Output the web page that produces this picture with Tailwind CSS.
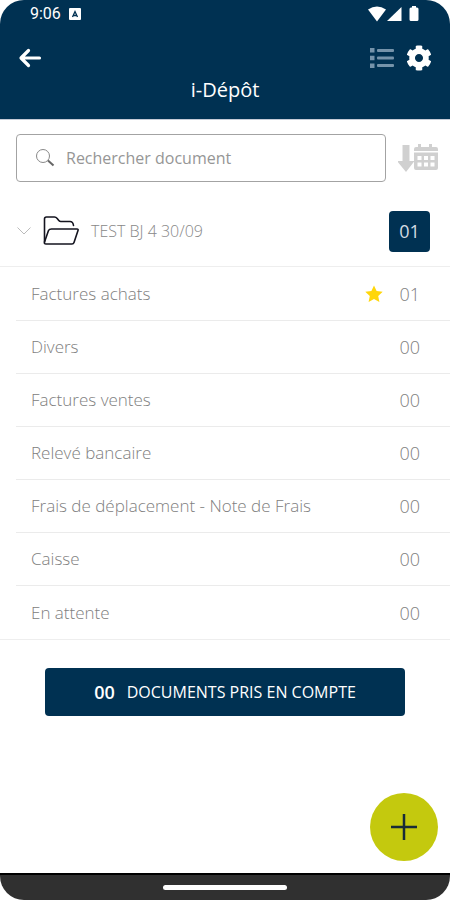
<!DOCTYPE html>
<html lang="fr">
<head>
    <meta charset="UTF-8">
    <meta name="viewport" content="width=device-width, initial-scale=1.0">
    <title>i-Dépôt</title>
    <script src="https://cdn.jsdelivr.net/npm/@tailwindcss/browser@4"></script>
</head>
<body class="bg-white font-['Open_Sans',sans-serif]">
    <div class="min-h-screen flex flex-col rounded-3xl overflow-hidden bg-white">
        <header class="bg-[#003152] text-white border-b border-[#c5cad6] pb-3">
            <!-- Status bar -->
            <div class="flex items-center justify-between h-7 px-[30px]">
                <div class="flex items-center gap-2">
                    <span class="font-[Roboto,sans-serif] text-base">9:06</span>
                    <svg class="w-3 h-3" viewBox="0 0 12 12" fill="none">
                        <rect width="12" height="12" rx="1" fill="#fff"/>
                        <path d="M3.500 9 6 3.500 8.500 9M4.500 7.500h3" stroke="#003152" stroke-width="1.300"/>
                    </svg>
                </div>
                <svg class="w-[52px] h-4" viewBox="0 0 52 16" fill="#fff">
                    <path d="M0 3.500Q9 -2.500 18 3.500L9 15.500z"/>
                    <path d="M33.500 1v14H19z"/>
                    <path d="M44 0h4v1.500h1q1.500 0 1.500 1.500v10.500q0 1.500-1.500 1.500h-6q-1.500 0-1.500-1.500V3q0-1.500 1.500-1.500h1z"/>
                </svg>
            </div>
            <div class="flex items-center justify-between h-7 mt-4 px-[18px]">
                <button type="button" aria-label="Retour">
                    <svg class="w-6 h-6" viewBox="0 0 24 24" fill="none" stroke="#fff" stroke-width="3.200" stroke-linecap="round" stroke-linejoin="round">
                        <path d="M10.500 4.500 3 12l7.500 7.500M3.500 12h18"/>
                    </svg>
                </button>
                <div class="flex items-center gap-3">
                    <button type="button" aria-label="Liste">
                        <svg class="w-6 h-6" viewBox="0 0 24 24" fill="#7593aa">
                            <path d="M0 2h4.500v4.500H0zM0 9.700h4.500v4.500H0zM0 17.400h4.500v4.500H0z"/>
                            <rect x="7" y="3" width="17" height="3" rx="1"/>
                            <rect x="7" y="10.500" width="17" height="3" rx="1"/>
                            <rect x="7" y="18" width="17" height="3" rx="1"/>
                        </svg>
                    </button>
                    <button type="button" aria-label="Paramètres">
                        <svg class="w-[26px] h-[26px]" viewBox="0 0 512 512" fill="#fff">
                            <path d="M487.400 315.700l-42.600-24.600c4.300-23.200 4.300-47 0-70.200l42.600-24.600c4.900-2.800 7.100-8.600 5.500-14-11.100-35.600-30-67.800-54.700-94.600-3.800-4.100-10-5.100-14.800-2.300L380.800 110c-17.900-15.400-38.500-27.300-60.800-35.100V25.800c0-5.600-3.900-10.500-9.400-11.700-36.700-8.200-74.300-7.800-109.200 0-5.500 1.200-9.400 6.100-9.400 11.700V75c-22.200 7.900-42.800 19.800-60.800 35.100L88.700 85.500c-4.900-2.800-11-1.900-14.800 2.300-24.700 26.700-43.600 58.900-54.700 94.600-1.700 5.400.6 11.200 5.500 14L67.300 221c-4.300 23.200-4.300 47 0 70.200l-42.600 24.600c-4.900 2.800-7.100 8.600-5.500 14 11.100 35.600 30 67.800 54.700 94.600 3.800 4.100 10 5.100 14.800 2.300l42.600-24.600c17.900 15.400 38.500 27.300 60.800 35.100v49.200c0 5.600 3.900 10.500 9.400 11.700 36.700 8.200 74.300 7.800 109.200 0 5.500-1.200 9.400-6.100 9.400-11.700v-49.200c22.200-7.900 42.800-19.800 60.800-35.100l42.600 24.600c4.900 2.800 11 1.900 14.800-2.300 24.700-26.700 43.600-58.900 54.700-94.600 1.500-5.500-.7-11.300-5.600-14.100zM256 336c-44.100 0-80-35.900-80-80s35.900-80 80-80 80 35.900 80 80-35.900 80-80 80z"/>
                        </svg>
                    </button>
                </div>
            </div>
            <h1 class="text-center text-xl leading-[35px]">i-Dépôt</h1>
        </header>

        <main class="relative flex-1">
            <div class="flex items-center gap-3 pt-[14px] pl-4 pr-3">
                <div class="flex-1 flex items-center gap-[11px] h-12 pl-[18px] border border-[#a3a3a3] rounded">
                    <svg class="w-5 h-5 shrink-0" viewBox="0 0 20 20" fill="none" stroke="#888">
                        <circle cx="8" cy="8" r="6.500"/>
                        <path d="M13 12.500l5.500 5" stroke-width="2" stroke="#666"/>
                    </svg>
                    <input type="text" aria-label="Rechercher document" placeholder="Rechercher document" class="w-full min-w-0 text-base text-[#666] placeholder:text-[#969696] outline-none">
                </div>
                <button type="button" aria-label="Trier par date">
                    <svg class="w-10 h-7" viewBox="0 0 40 28" fill="#d0d0d0">
                        <path d="M4.500 1h7v16h5L8 28-1 17h5.500z"/>
                        <path fill-rule="evenodd" d="M20 0h3v3h8V0h3v3h4q2 0 2 2v2H16V5q0-2 2-2h2zM16 8.500h24V24q0 2-2 2H18q-2 0-2-2zM19.500 12v4h4v-4zM26 12v4h4v-4zM32.500 12v4h4v-4zM19.500 18.500v4h4v-4zM26 18.500v4h4v-4zM32.500 18.500v4h4v-4z"/>
                    </svg>
                </button>
            </div>

            <!-- Folder -->
            <div class="flex items-center h-[70px] mt-[14px] pl-[17px] pr-5">
                <button type="button" aria-expanded="true" class="flex flex-1 items-center text-base font-light text-[#888]">
                    <svg class="w-[14px] h-2 mr-3" viewBox="0 0 14 8" fill="none" stroke="#bbb">
                        <path d="M.5.5 7 7 13.500.5"/>
                    </svg>
                    <svg class="w-9 h-[30px] mr-3" viewBox="0 0 36 30" fill="none" stroke="#14141f" stroke-width="1.600" stroke-linejoin="round" stroke-linecap="round">
                        <path d="M1.500 26V3q0-2 2-2h8q1.500 0 2.500 1.300l1.800 2.200q.8 1 2 1H27q3 0 3.500 4"/>
                        <path d="M8.500 13H34q1.500 0 1 1.500l-4 12q-.5 1.500-2 1.500H3q-2 0-1.500-2l4-11.500Q6.200 13 8.500 13z"/>
                    </svg>
                    TEST BJ 4 30/09
                </button>
                <span class="flex items-center justify-center w-[41px] h-[41px] rounded bg-[#003152] text-lg text-[#d5dce3]">01</span>
            </div>

            <!-- Categories -->
            <ul class="border-y border-[#eee] text-[17px] font-light text-[#808080]">
                <li class="flex items-center h-[54px] ml-4 pl-[15px] pr-[30px] border-b border-[#ebebeb]">
                    <a href="#" class="flex-1">Factures achats</a>
                    <svg class="w-[18px] h-[18px] mr-4" viewBox="0 0 18 18" fill="#ffd60a">
                        <path d="M9 .5l2.600 5.600 6.100.7-4.500 4.200 1.200 6.100L9 14.100l-5.400 3 1.200-6.100L.3 6.800l6.100-.7z"/>
                    </svg>
                    <span class="text-lg">01</span>
                </li>
                <li class="flex items-center h-[53px] ml-4 pl-[15px] pr-[30px] border-b border-[#ebebeb]">
                    <a href="#" class="flex-1">Divers</a>
                    <span class="text-lg">00</span>
                </li>
                <li class="flex items-center h-[53px] ml-4 pl-[15px] pr-[30px] border-b border-[#ebebeb]">
                    <a href="#" class="flex-1">Factures ventes</a>
                    <span class="text-lg">00</span>
                </li>
                <li class="flex items-center h-[53px] ml-4 pl-[15px] pr-[30px] border-b border-[#ebebeb]">
                    <a href="#" class="flex-1">Relevé bancaire</a>
                    <span class="text-lg">00</span>
                </li>
                <li class="flex items-center h-[53px] ml-4 pl-[15px] pr-[30px] border-b border-[#ebebeb]">
                    <a href="#" class="flex-1">Frais de déplacement - Note de Frais</a>
                    <span class="text-lg">00</span>
                </li>
                <li class="flex items-center h-[53px] ml-4 pl-[15px] pr-[30px] border-b border-[#ebebeb]">
                    <a href="#" class="flex-1">Caisse</a>
                    <span class="text-lg">00</span>
                </li>
                <li class="flex items-center h-[53px] ml-4 pl-[15px] pr-[30px]">
                    <a href="#" class="flex-1">En attente</a>
                    <span class="text-lg">00</span>
                </li>
            </ul>

            <div class="px-[45px] pt-7">
                <button type="button" class="flex items-center justify-center gap-3 w-full h-12 rounded bg-[#003152] text-base text-white">
                    <span class="text-lg font-semibold">00</span>
                    DOCUMENTS PRIS EN COMPTE
                </button>
            </div>

            <button type="button" aria-label="Ajouter" class="absolute right-3 bottom-3 flex items-center justify-center w-[68px] h-[68px] rounded-full bg-[#c4c90e]">
                <svg class="w-[26px] h-[26px]" viewBox="0 0 26 26" fill="none" stroke="#182b38" stroke-width="2.500">
                    <path d="M13 0v26M0 13h26"/>
                </svg>
            </button>
        </main>

        <!-- Gesture bar -->
        <footer class="flex justify-center h-[27px] pt-[10px] bg-[#303030] border-t-2 border-black">
            <div class="w-[124px] h-[5px] rounded-full bg-white"></div>
        </footer>
    </div>
</body>
</html>
